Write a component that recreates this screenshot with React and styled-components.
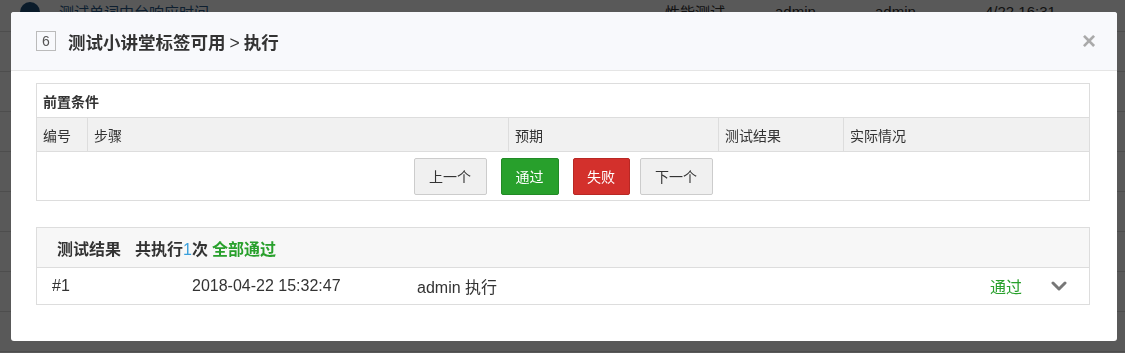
import React from "react";
import styled, { createGlobalStyle } from "styled-components";

const GlobalStyle = createGlobalStyle`
  html, body {
    margin: 0;
    padding: 0;
    width: 1125px;
    height: 353px;
    overflow: hidden;
    background: #fff;
    font-family: "Liberation Sans", "Noto Sans CJK SC", sans-serif;
    color: #333;
  }
`;

// page behind the dialog
const Page = styled.div`
  margin-top: -8px;
`;

const PageRow = styled.div`
  height: 39px;
  border-bottom: 1px solid #ddd;
  display: flex;
  align-items: center;
  font-size: 15px;
  color: #333;
`;

const RowIcon = styled.span`
  width: 20px;
  height: 20px;
  margin: 0 19px 0 20px;
  border-radius: 50%;
  background: #1d4f7a;
`;

const PageCell = styled.span`
  width: ${(p) => p.w}px;
  color: ${(p) => (p.link ? "#2a5b8a" : "#333")};
`;

const Backdrop = styled.div`
  position: fixed;
  inset: 0;
  background: rgba(0, 0, 0, 0.65);
  padding: 12px 8px 12px 11px;
`;

const Modal = styled.div`
  background: #fff;
  border-radius: 3px;
  overflow: hidden;
  height: 329px;
`;

const Header = styled.div`
  height: 58px;
  background: #f8f9fc;
  border-bottom: 1px solid #e5e5e5;
  display: flex;
  align-items: center;
  padding: 0 21px 0 25px;
`;

const IdBox = styled.span`
  width: 18px;
  height: 18px;
  border: 1px solid #bbb;
  font-size: 14px;
  color: #555;
  display: flex;
  align-items: center;
  justify-content: center;
  margin-right: 12px;
`;

const Title = styled.h3`
  margin: 0;
  flex: 1;
  font-size: 17.5px;
  font-weight: bold;
  color: #333;
`;

const Sep = styled.span`
  font-weight: normal;
  margin: 0 4px;
`;

const Close = styled.span`
  font-size: 24px;
  font-weight: bold;
  color: #aaa;
  line-height: 1;
`;

const Body = styled.div`
  padding: 12px 27px 0 25px;
`;

const StepTable = styled.div`
  border: 1px solid #ddd;
  font-size: 14px;
`;

const PreRow = styled.div`
  height: 33px;
  border-bottom: 1px solid #ddd;
  display: flex;
  align-items: center;
  padding-left: 6px;
  font-weight: bold;
`;

const HeadRow = styled.div`
  display: grid;
  grid-template-columns: 50px 421px 210px 125px 1fr;
  background: #f1f1f1;
  border-bottom: 1px solid #ddd;
  height: 33px;
`;

const HeadCell = styled.div`
  display: flex;
  align-items: center;
  padding-left: 6px;
  border-left: ${(p) => (p.first ? "none" : "1px solid #ddd")};
`;

const ActionRow = styled.div`
  height: 48px;
  display: flex;
  align-items: center;
  justify-content: center;
  gap: 14px;
`;

const tones = {
  default: { bg: "#f0f0f0", border: "#ccc", color: "#333" },
  success: { bg: "#28a02c", border: "#228a26", color: "#fff" },
  danger: { bg: "#d3302c", border: "#b82824", color: "#fff" },
};

const Button = styled.button`
  height: 37px;
  width: ${(p) => p.w}px;
  background: ${(p) => tones[p.tone].bg};
  border: 1px solid ${(p) => tones[p.tone].border};
  color: ${(p) => tones[p.tone].color};
  border-radius: 2px;
  font-family: inherit;
  font-size: 14px;
  padding: 0;
  margin-left: ${(p) => p.ml || 0}px;
`;

const ResultPanel = styled.div`
  margin-top: 26px;
  border: 1px solid #ddd;
`;

const ResultHead = styled.div`
  height: 39px;
  background: #f7f7f7;
  border-bottom: 1px solid #ddd;
  display: flex;
  align-items: center;
  padding-left: 20px;
  font-size: 16px;
  font-weight: bold;
`;

const Count = styled.span`
  margin-left: 14px;
`;

const Blue = styled.span`
  color: #3aa0dc;
  font-weight: normal;
`;

const Green = styled.span`
  color: #28a02c;
  margin-left: ${(p) => p.ml || 0}px;
  font-weight: ${(p) => (p.normal ? "normal" : "bold")};
`;

const ResultRow = styled.div`
  height: 36px;
  display: flex;
  align-items: center;
  padding-left: 15px;
  font-size: 16px;
`;

const Cell = styled.span`
  width: ${(p) => p.w}px;
`;

const Spacer = styled.span`
  flex: 1;
`;

const Chevron = styled.svg`
  margin: 0 22px 0 29px;
`;

export default function App() {
  return (
    <>
      <GlobalStyle />
      <Page>
        <PageRow>
          <RowIcon />
          <PageCell w={606} link>测试单词中台响应时间</PageCell>
          <PageCell w={110}>性能测试</PageCell>
          <PageCell w={100}>admin</PageCell>
          <PageCell w={110}>admin</PageCell>
          <PageCell w={100}>4/22 16:31</PageCell>
        </PageRow>
        {Array.from({ length: 8 }).map((_, i) => (
          <PageRow key={i} />
        ))}
      </Page>
      <Backdrop>
        <Modal>
          <Header>
            <IdBox>6</IdBox>
            <Title>
              测试小讲堂标签可用<Sep>&gt;</Sep>执行
            </Title>
            <Close>×</Close>
          </Header>
          <Body>
            <StepTable>
              <PreRow>前置条件</PreRow>
              <HeadRow>
                <HeadCell first>编号</HeadCell>
                <HeadCell>步骤</HeadCell>
                <HeadCell>预期</HeadCell>
                <HeadCell>测试结果</HeadCell>
                <HeadCell>实际情况</HeadCell>
              </HeadRow>
              <ActionRow>
                <Button tone="default" w={73}>上一个</Button>
                <Button tone="success" w={58}>通过</Button>
                <Button tone="danger" w={57}>失败</Button>
                <Button tone="default" w={73} ml={-4}>下一个</Button>
              </ActionRow>
            </StepTable>
            <ResultPanel>
              <ResultHead>
                测试结果
                <Count>
                  共执行<Blue>1</Blue>次
                </Count>
                <Green ml={4}>全部通过</Green>
              </ResultHead>
              <ResultRow>
                <Cell w={140}>#1</Cell>
                <Cell w={225}>2018-04-22 15:32:47</Cell>
                <Cell w={200}>admin 执行</Cell>
                <Spacer />
                <Green normal>通过</Green>
                <Chevron width="16" height="10" viewBox="0 0 16 10">
                  <polyline
                    points="2,2 8,8 14,2"
                    fill="none"
                    stroke="#777"
                    strokeWidth="3"
                    strokeLinecap="round"
                    strokeLinejoin="round"
                  />
                </Chevron>
              </ResultRow>
            </ResultPanel>
          </Body>
        </Modal>
      </Backdrop>
    </>
  );
}
